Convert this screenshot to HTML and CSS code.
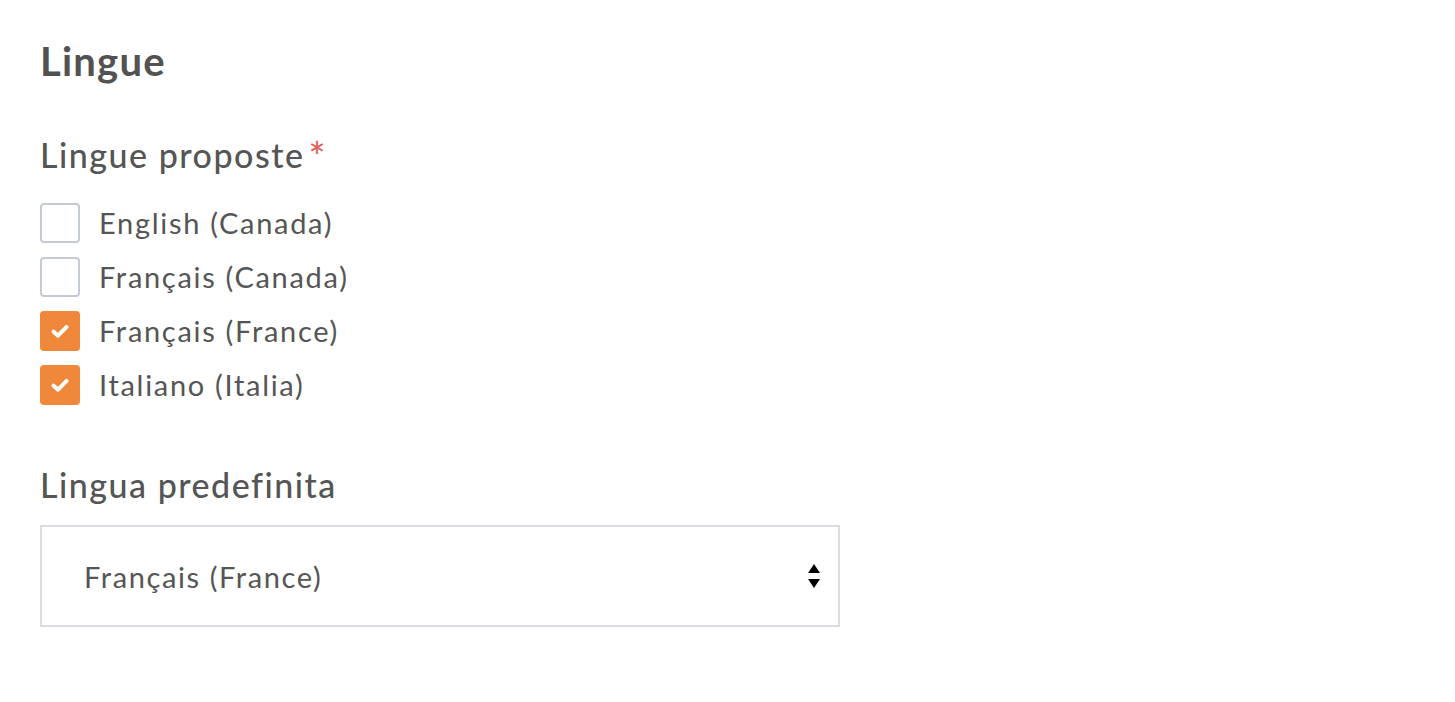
FILE: index.html
```html
<!DOCTYPE html>
<html lang="it">
<head>
  <meta charset="UTF-8">
  <meta name="viewport" content="width=device-width, initial-scale=1.0">
  <title>Lingue</title>
  <link rel="stylesheet" href="styles.css">
</head>
<body>
  <h2>Lingue</h2>
  <form id="languagesForm">
    <div class="field">
      <span class="label">Lingue proposte<span class="required">*</span></span>
      <div class="checks">
        <label class="check"><span class="box"></span>English (Canada)</label>
        <label class="check"><span class="box"></span>Français (Canada)</label>
        <label class="check"><span class="box checked"><svg viewBox="0 0 20 20" width="22" height="22"><path d="M4 10.5 L8.2 14.3 L16 6.2" fill="none" stroke="#fff" stroke-width="3.6" stroke-linecap="round" stroke-linejoin="round"/></svg></span>Français (France)</label>
        <label class="check"><span class="box checked"><svg viewBox="0 0 20 20" width="22" height="22"><path d="M4 10.5 L8.2 14.3 L16 6.2" fill="none" stroke="#fff" stroke-width="3.6" stroke-linecap="round" stroke-linejoin="round"/></svg></span>Italiano (Italia)</label>
      </div>
    </div>

    <div class="field">
      <label class="label" for="defaultLang">Lingua predefinita</label>
      <div class="select" id="defaultLang">
        <span>Français (France)</span>
        <svg class="arrows" viewBox="0 0 12 26" width="12" height="26"><path d="M6 1 L12 10 L0 10 Z M0 16 L12 16 L6 25 Z" fill="#000"/></svg>
      </div>
    </div>
  </form>
</body>
</html>
```

FILE: styles.css
```css
body {
  font-family: Lato, "Noto Sans", sans-serif;
  color: #555;
  margin: 0;
  padding: 35px 40px;
  background: #fff;
}
h2 {
  font-size: 40px;
  font-weight: 700;
  color: #525252;
  margin: 0 0 48px;
  line-height: 52px;
  letter-spacing: 1.2px;
}
.field {
  display: flex;
  flex-direction: column;
  margin-bottom: 46px;
}
.label {
  font-size: 34px;
  font-weight: 500;
  color: #555;
  line-height: 40px;
  margin-bottom: 20px;
  letter-spacing: 1.5px;
}
.required {
  display: inline-block;
  vertical-align: top;
  font-size: 40px;
  line-height: 30px;
  margin: 6px 0 0 4px;
  color: #e2605a;
}
.checks {
  padding-top: 8px;
}
.check {
  display: flex;
  align-items: center;
  gap: 19px;
  font-size: 29px;
  line-height: 40px;
  height: 40px;
  margin-bottom: 14px;
  letter-spacing: 1.7px;
}
.box {
  box-sizing: border-box;
  width: 40px;
  height: 40px;
  border: 2px solid #c4cad6;
  border-radius: 4px;
  display: flex;
  align-items: center;
  justify-content: center;
  flex: none;
}
.box.checked {
  background: #f0883b;
  border-color: #f0883b;
}
.select {
  box-sizing: border-box;
  width: 800px;
  height: 102px;
  border: 2px solid #d9dce1;
  display: flex;
  align-items: center;
  justify-content: space-between;
  padding: 0 18px 0 42px;
  font-size: 29px;
  letter-spacing: 1.6px;
}
.arrows {
  display: block;
}
```
